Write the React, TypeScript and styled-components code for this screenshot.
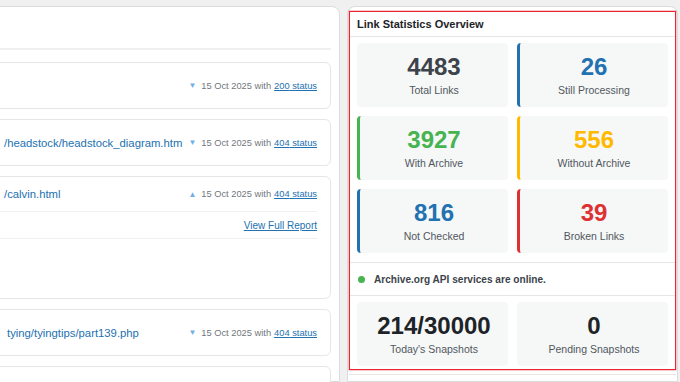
import { FC } from "react"
import styled, { createGlobalStyle } from "styled-components"

const GlobalStyle = createGlobalStyle`
  html, body {
    margin: 0;
    padding: 0;
    background: #f0f0f1;
    font-family: "Liberation Sans", Arial, sans-serif;
  }
`

const Page = styled.div`
  display: flex;
  gap: 7px;
  height: 382px;
  padding: 6px 2px 0 0;
  box-sizing: border-box;
  overflow: hidden;
`
const LeftPanel = styled.div`
  flex: none;
  width: 360px;
  margin-left: -20px;
  background: #fff;
  border: 1px solid #dcdcde;
  border-radius: 8px 8px 0 0;
  box-sizing: border-box;
`
const LeftHeader = styled.div`
  height: 41px;
  margin-right: 8px;
  border-bottom: 2px solid #f0f0f1;
`
const List = styled.div`
  display: flex;
  flex-direction: column;
  gap: 10px;
  padding: 12px 8px 0 10px;
`
const RowCard = styled.div`
  border: 1px solid #e6e6e6;
  border-radius: 6px;
  background: #fff;
`
const RowHead = styled.div<{ $h: number; $indent: number }>`
  display: flex;
  align-items: center;
  justify-content: space-between;
  height: ${p => p.$h}px;
  padding: 0 13px 0 ${p => p.$indent}px;
`
const LinkText = styled.span`
  font-size: 11.3px;
  color: #2271b1;
`
const Meta = styled.span`
  display: flex;
  align-items: center;
  font-size: 9.3px;
  color: #72777c;
  white-space: nowrap;
`
const Caret = styled.span`
  font-size: 8px;
  color: #72aee6;
  margin-right: 5px;
`
const StatusLink = styled.a`
  color: #2271b1;
  text-decoration: underline;
  margin-left: 3px;
`
const ReportRow = styled.div`
  display: flex;
  justify-content: flex-end;
  align-items: center;
  height: 26px;
  margin-right: 13px;
  border-top: 1px solid #f0f0f1;
  border-bottom: 1px solid #f0f0f1;
`
const ReportLink = styled.a`
  font-size: 10px;
  color: #2271b1;
  text-decoration: underline;
`
const RowBody = styled.div`
  height: 59px;
`
const EmptyRow = styled.div`
  height: 45px;
`

const RightPanel = styled.div`
  flex: none;
  width: 331px;
  background: #fff;
  border: 1px solid #dcdcde;
  border-radius: 8px 8px 0 0;
  box-sizing: border-box;
  padding: 4px 1px 0;
`
const Highlight = styled.div`
  border: 1px solid #e8262e;
  box-shadow: 0 0 0 0.5px rgba(232, 38, 46, 0.5);
`
const Title = styled.div`
  height: 24px;
  line-height: 24px;
  padding-left: 7px;
  font-size: 11px;
  font-weight: 700;
  color: #1d2327;
  border-bottom: 1px solid #e6e6e6;
`
const Grid = styled.div<{ $pb: number }>`
  display: grid;
  grid-template-columns: 1fr 1fr;
  gap: 9px;
  padding: 6px 7px ${p => p.$pb}px;
`
const StatCard = styled.div<{ $accent?: string }>`
  display: flex;
  flex-direction: column;
  align-items: center;
  height: 64px;
  box-sizing: border-box;
  padding-top: 10px;
  background: #f6f7f7;
  border-radius: 4px;
  border-left: 3px solid ${p => p.$accent ?? "transparent"};
`
const StatNumber = styled.div<{ $color: string; $size?: number }>`
  font-size: ${p => p.$size ?? 24}px;
  line-height: 28px;
  font-weight: 700;
  color: ${p => p.$color};
`
const StatLabel = styled.div`
  margin-top: 2px;
  font-size: 10.5px;
  line-height: 14px;
  color: #50575e;
`
const StatusBar = styled.div`
  display: flex;
  align-items: center;
  height: 32px;
  padding-left: 8px;
  border-top: 1px solid #e6e6e6;
  border-bottom: 1px solid #e6e6e6;
  font-size: 10.1px;
  font-weight: 700;
  color: #3c434a;
`
const Dot = styled.span`
  width: 7px;
  height: 7px;
  border-radius: 50%;
  background: #46b450;
  margin-right: 9px;
`
const NextSection = styled.div`
  margin-top: 4px;
  border-top: 1px solid #e6e6e6;
  height: 20px;
`

const rows = [
  { link: "", code: "200", up: false, indent: 12 },
  { link: "/headstock/headstock_diagram.htm", code: "404", up: false, indent: 12 },
  { link: "/calvin.html", code: "404", up: true, indent: 12, open: true },
  { link: "tying/tyingtips/part139.php", code: "404", up: false, indent: 15 },
]

const stats = [
  { value: "4483", label: "Total Links", color: "#3c434a" },
  { value: "26", label: "Still Processing", color: "#2271b1", accent: "#2271b1" },
  { value: "3927", label: "With Archive", color: "#46b450", accent: "#46b450" },
  { value: "556", label: "Without Archive", color: "#ffb900", accent: "#ffb900" },
  { value: "816", label: "Not Checked", color: "#2271b1", accent: "#2271b1" },
  { value: "39", label: "Broken Links", color: "#dc3232", accent: "#dc3232" },
]

const App: FC = () => {
  return (
    <>
      <GlobalStyle />
      <Page>
        <LeftPanel>
          <LeftHeader />
          <List>
            {rows.map((r, i) => (
              <RowCard key={i}>
                <RowHead $h={r.open ? 34 : 45} $indent={r.indent}>
                  <LinkText>{r.link}</LinkText>
                  <Meta>
                    <Caret>{r.up ? "▲" : "▼"}</Caret>
                    15 Oct 2025 with
                    <StatusLink>{r.code} status</StatusLink>
                  </Meta>
                </RowHead>
                {r.open && (
                  <>
                    <ReportRow>
                      <ReportLink>View Full Report</ReportLink>
                    </ReportRow>
                    <RowBody />
                  </>
                )}
              </RowCard>
            ))}
            <RowCard>
              <EmptyRow />
            </RowCard>
          </List>
        </LeftPanel>
        <RightPanel>
          <Highlight>
            <Title>Link Statistics Overview</Title>
            <Grid $pb={9}>
              {stats.map(s => (
                <StatCard key={s.label} $accent={s.accent}>
                  <StatNumber $color={s.color}>{s.value}</StatNumber>
                  <StatLabel>{s.label}</StatLabel>
                </StatCard>
              ))}
            </Grid>
            <StatusBar>
              <Dot />
              Archive.org API services are online.
            </StatusBar>
            <Grid $pb={3}>
              <StatCard>
                <StatNumber $color="#1d2327" $size={24}>214/30000</StatNumber>
                <StatLabel>Today's Snapshots</StatLabel>
              </StatCard>
              <StatCard>
                <StatNumber $color="#1d2327" $size={24}>0</StatNumber>
                <StatLabel>Pending Snapshots</StatLabel>
              </StatCard>
            </Grid>
          </Highlight>
          <NextSection />
        </RightPanel>
      </Page>
    </>
  )
}

export default App
